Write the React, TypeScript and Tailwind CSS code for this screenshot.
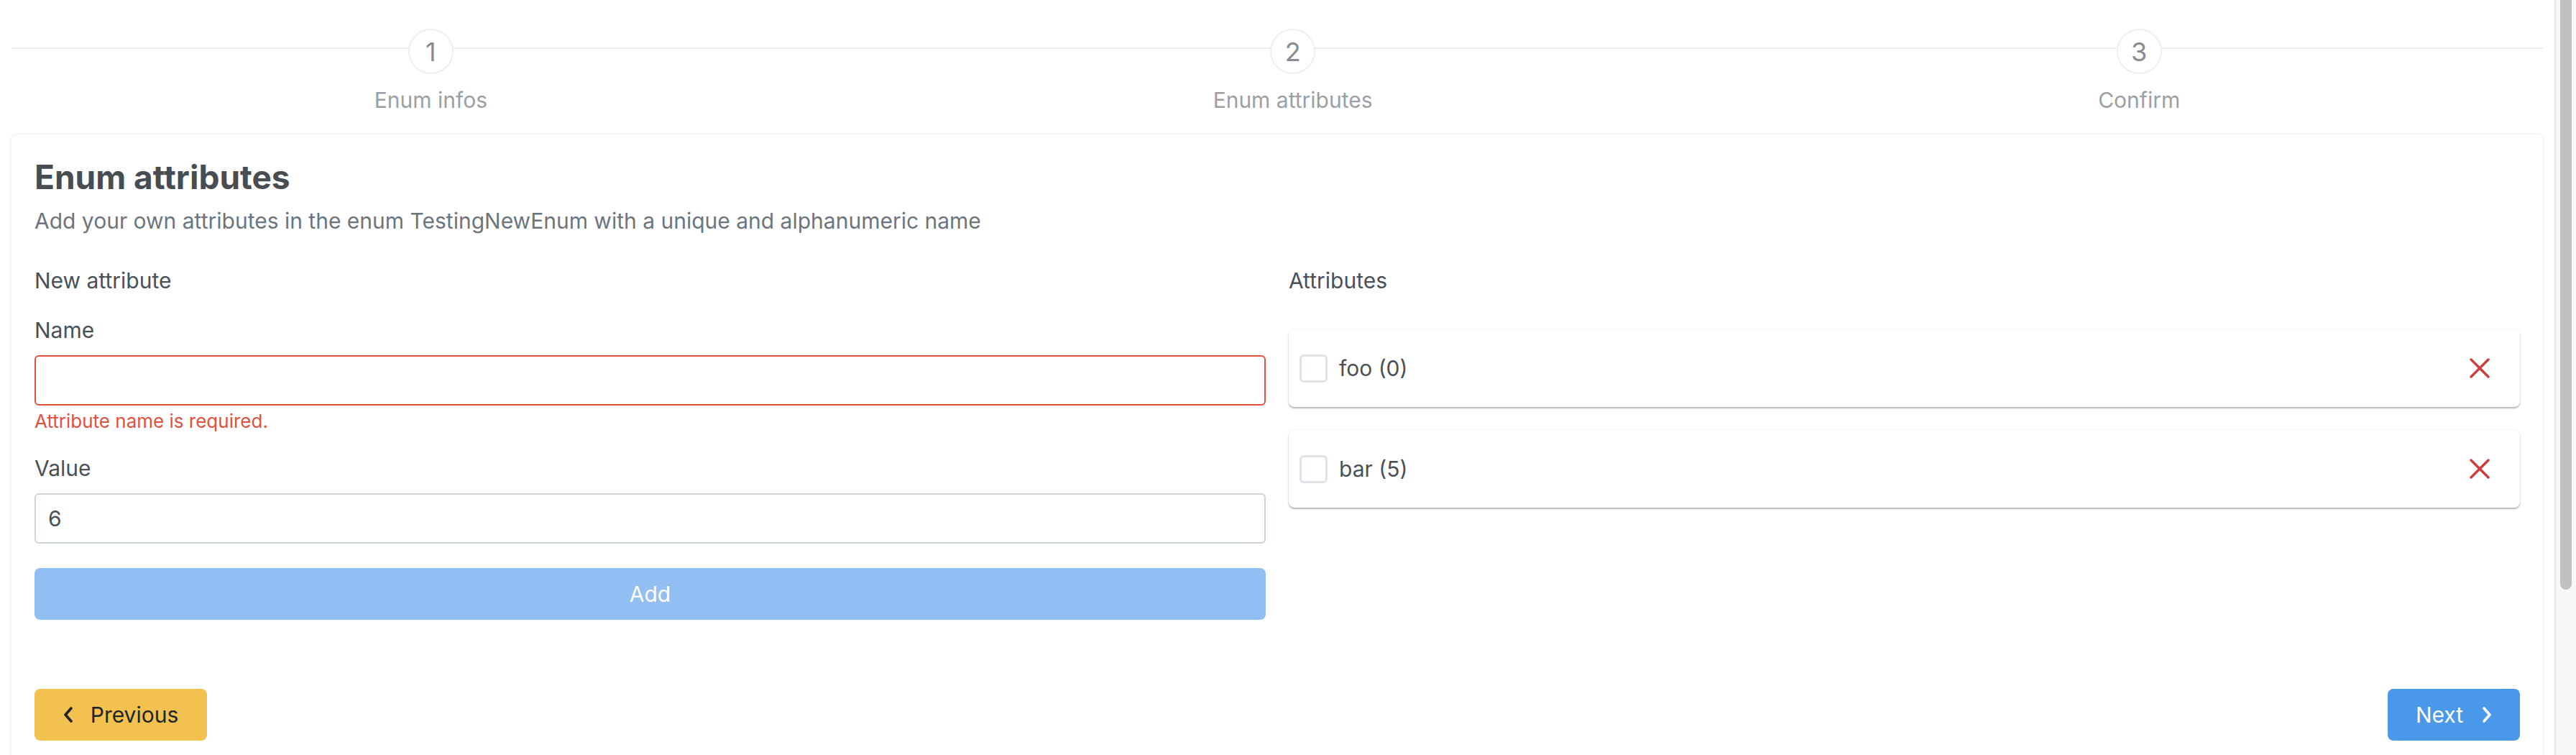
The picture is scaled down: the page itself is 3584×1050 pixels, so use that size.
import { ReactNode } from 'react'

const steps = [
  { num: 1, label: 'Enum infos' },
  { num: 2, label: 'Enum attributes' },
  { num: 3, label: 'Confirm' },
]

const attributes = [
  { name: 'foo', value: 0 },
  { name: 'bar', value: 5 },
]

const ChevronLeft = () => (
  <svg width="14" height="22" viewBox="0 0 14 22" fill="none">
    <polyline points="11,2 3,11 11,20" stroke="currentColor" strokeWidth="3.6" strokeLinecap="round" strokeLinejoin="round" />
  </svg>
)

const ChevronRight = () => (
  <svg width="14" height="22" viewBox="0 0 14 22" fill="none">
    <polyline points="3,2 11,11 3,20" stroke="currentColor" strokeWidth="3.6" strokeLinecap="round" strokeLinejoin="round" />
  </svg>
)

const Cross = () => (
  <svg width="28" height="28" viewBox="0 0 28 28" fill="none">
    <path d="M2 2 L26 26 M26 2 L2 26" stroke="#d13b3b" strokeWidth="3.4" strokeLinecap="round" />
  </svg>
)

const Label = ({ children }: { children: ReactNode }) => (
  <div className="text-[30px] leading-[45px] text-[#495057]">{children}</div>
)

const Stepper = () => (
  <div className="relative mx-[16px] pt-[40px]">
    <div className="absolute left-0 right-0 top-[66px] h-[2px] bg-[#ededed]" />
    <div className="relative flex">
      {steps.map((s) => (
        <div key={s.num} className="flex flex-auto flex-col items-center">
          <div className="flex h-[63px] w-[63px] items-center justify-center rounded-full border-2 border-[#efefef] bg-white text-[36px] leading-none text-[#888b90]">
            {s.num}
          </div>
          <div className="mt-[14px] text-[30px] leading-[45px] text-[#9c9fa4]">{s.label}</div>
        </div>
      ))}
    </div>
  </div>
)

const AttributeRow = ({ name, value }: { name: string; value: number }) => (
  <div className="flex h-[108px] items-center rounded-[8px] bg-white pl-[15px] pr-[41px] shadow-[0_2px_2px_rgba(0,0,0,0.28),0_0_4px_rgba(0,0,0,0.06)]">
    <div className="h-[39px] w-[39px] rounded-[6px] border-[3px] border-[#dfe3e7] bg-white" />
    <span className="ml-[16px] text-[30px] leading-[45px] text-[#495057]">
      {name} ({value})
    </span>
    <button type="button" className="ml-auto flex h-[30px] w-[30px] items-center justify-center">
      <Cross />
    </button>
  </div>
)

const App = () => {
  return (
    <div className="flex h-[1050px] w-full overflow-hidden bg-white font-['Inter',sans-serif]">
      <main className="flex-1">
        <Stepper />

        <section className="mx-[16px] mt-[25px] rounded-[8px] bg-white px-[32px] pb-[32px] pt-[32px] shadow-[0_0_4px_rgba(0,0,0,0.1)]">
          <h2 className="text-[46px] font-bold leading-[55px] text-[#484d53]">Enum attributes</h2>
          <p className="mt-[11px] text-[30px] leading-[45px] text-[#6c757d]">
            Add your own attributes in the enum TestingNewEnum with a unique and alphanumeric name
          </p>

          <div className="mt-[38px] grid grid-cols-2 gap-[32px]">
            <div>
              <Label>New attribute</Label>
              <div className="mt-[24px]">
                <Label>Name</Label>
                <input
                  type="text"
                  className="mt-[12px] block h-[70px] w-full rounded-[6px] border-2 border-[#e3503e] bg-white px-[17px] text-[30px] text-[#495057] outline-none"
                />
                <div className="mt-[2px] text-[26px] leading-[39px] text-[#e3503e]">Attribute name is required.</div>
              </div>
              <div className="mt-[24px]">
                <Label>Value</Label>
                <input
                  type="text"
                  defaultValue="6"
                  className="mt-[12px] block h-[70px] w-full rounded-[6px] border-2 border-[#ced4da] bg-white px-[17px] text-[30px] text-[#495057] outline-none"
                />
              </div>
              <button
                type="button"
                disabled
                className="mt-[34px] block h-[72px] w-full rounded-[8px] bg-[#91bff3] text-[30px] text-white"
              >
                Add
              </button>
            </div>

            <div>
              <Label>Attributes</Label>
              <div className="mt-[45px] flex flex-col gap-[32px]">
                {attributes.map((a) => (
                  <AttributeRow key={a.name} name={a.name} value={a.value} />
                ))}
              </div>
            </div>
          </div>

          <div className="mt-[96px] flex items-center justify-between">
            <button
              type="button"
              className="flex h-[72px] w-[240px] items-center justify-center gap-[24px] rounded-[8px] bg-[#f2c14f] text-[30px] text-[#212529]"
            >
              <ChevronLeft />
              Previous
            </button>
            <button
              type="button"
              className="flex h-[72px] w-[184px] items-center justify-center gap-[26px] rounded-[8px] bg-[#4a98ea] text-[30px] text-white"
            >
              Next
              <ChevronRight />
            </button>
          </div>
        </section>
      </main>

      {/* fake scrollbar */}
      <div className="flex h-full w-[30px] border-l-2 border-[#e8e8e8] bg-[#f7f7f7] pl-[6px] pr-[4px]">
        <div className="h-[820px] w-[16px] rounded-b-[8px] bg-[#c1c1c1]" />
      </div>
    </div>
  )
}

export default App
